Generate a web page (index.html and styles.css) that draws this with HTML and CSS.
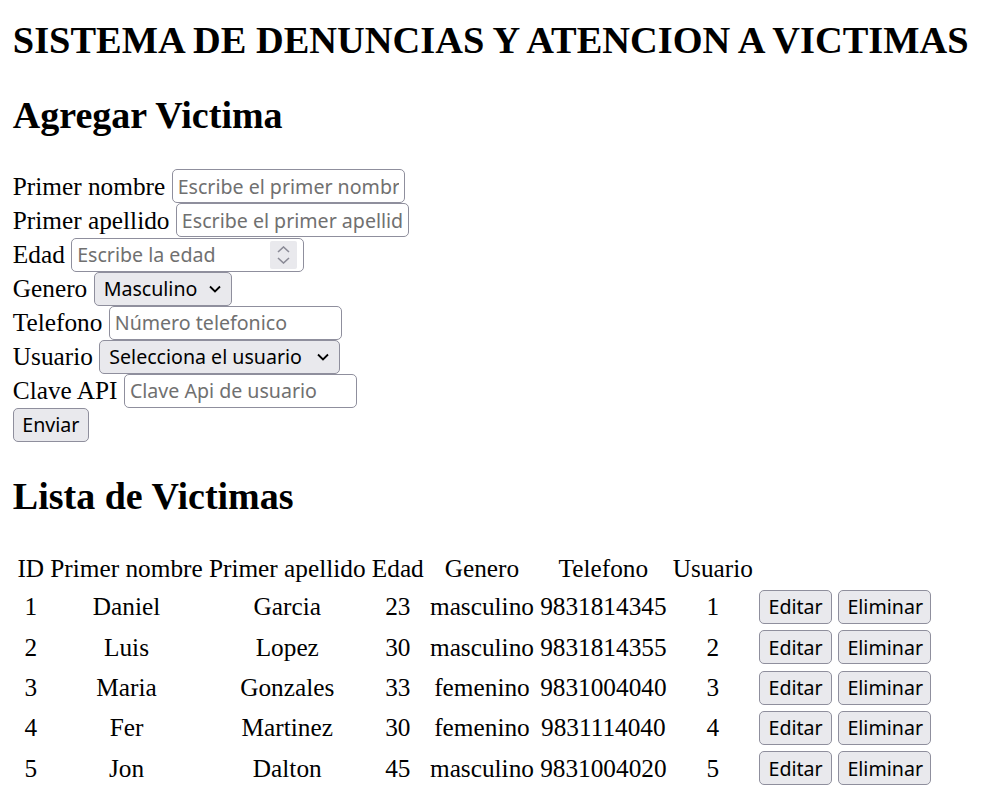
FILE: index.html
```html
<!DOCTYPE html>
<html lang="es">
<head>
<meta charset="utf-8">
<title>Sistema de denuncias</title>
<link rel="stylesheet" href="styles.css">
</head>
<body>
<div class="page">
  <h1 class="title">SISTEMA DE DENUNCIAS Y ATENCION A VICTIMAS</h1>
  <h2 class="section-title">Agregar Victima</h2>
  <form class="victim-form">
    <div class="field">
      <label class="field-label">Primer nombre</label>
      <input class="text-input" type="text" placeholder="Escribe el primer nombre">
    </div>
    <div class="field">
      <label class="field-label">Primer apellido</label>
      <input class="text-input" type="text" placeholder="Escribe el primer apellido">
    </div>
    <div class="field">
      <label class="field-label">Edad</label>
      <span class="num-box">
        <input class="num-input" type="text" placeholder="Escribe la edad">
        <span class="spin">
          <svg width="13" height="7" viewBox="0 0 13 7"><path d="M1 6 L6.5 1 L12 6" fill="none" stroke="#8a8a96" stroke-width="1.6"/></svg>
          <svg width="13" height="7" viewBox="0 0 13 7"><path d="M1 1 L6.5 6 L12 1" fill="none" stroke="#8a8a96" stroke-width="1.6"/></svg>
        </span>
      </span>
    </div>
    <div class="field">
      <label class="field-label">Genero</label>
      <span class="select-box select-genero">
        <select class="select">
          <option>Masculino</option>
          <option>Femenino</option>
        </select>
        <svg class="chevron" width="12" height="8" viewBox="0 0 12 8"><path d="M1 1.5 L6 6.5 L11 1.5" fill="none" stroke="#000" stroke-width="1.8"/></svg>
      </span>
    </div>
    <div class="field">
      <label class="field-label">Telefono</label>
      <input class="text-input" type="text" placeholder="Número telefonico">
    </div>
    <div class="field">
      <label class="field-label">Usuario</label>
      <span class="select-box select-usuario">
        <select class="select">
          <option>Selecciona el usuario</option>
        </select>
        <svg class="chevron" width="12" height="8" viewBox="0 0 12 8"><path d="M1 1.5 L6 6.5 L11 1.5" fill="none" stroke="#000" stroke-width="1.8"/></svg>
      </span>
    </div>
    <div class="field">
      <label class="field-label">Clave API</label>
      <input class="text-input" type="text" placeholder="Clave Api de usuario">
    </div>
    <div class="field">
      <button class="btn btn-submit" type="button">Enviar</button>
    </div>
  </form>
  <h2 class="section-title">Lista de Victimas</h2>
  <table class="victims">
    <thead>
      <tr>
        <th class="head">ID</th>
        <th class="head">Primer nombre</th>
        <th class="head">Primer apellido</th>
        <th class="head">Edad</th>
        <th class="head">Genero</th>
        <th class="head">Telefono</th>
        <th class="head">Usuario</th>
        <th class="head"></th>
      </tr>
    </thead>
    <tbody>
      <tr>
        <td class="cell">1</td><td class="cell">Daniel</td><td class="cell">Garcia</td><td class="cell">23</td><td class="cell">masculino</td><td class="cell">9831814345</td><td class="cell">1</td>
        <td class="cell"><button class="btn btn-edit" type="button">Editar</button> <button class="btn btn-del" type="button">Eliminar</button></td>
      </tr>
      <tr>
        <td class="cell">2</td><td class="cell">Luis</td><td class="cell">Lopez</td><td class="cell">30</td><td class="cell">masculino</td><td class="cell">9831814355</td><td class="cell">2</td>
        <td class="cell"><button class="btn btn-edit" type="button">Editar</button> <button class="btn btn-del" type="button">Eliminar</button></td>
      </tr>
      <tr>
        <td class="cell">3</td><td class="cell">Maria</td><td class="cell">Gonzales</td><td class="cell">33</td><td class="cell">femenino</td><td class="cell">9831004040</td><td class="cell">3</td>
        <td class="cell"><button class="btn btn-edit" type="button">Editar</button> <button class="btn btn-del" type="button">Eliminar</button></td>
      </tr>
      <tr>
        <td class="cell">4</td><td class="cell">Fer</td><td class="cell">Martinez</td><td class="cell">30</td><td class="cell">femenino</td><td class="cell">9831114040</td><td class="cell">4</td>
        <td class="cell"><button class="btn btn-edit" type="button">Editar</button> <button class="btn btn-del" type="button">Eliminar</button></td>
      </tr>
      <tr>
        <td class="cell">5</td><td class="cell">Jon</td><td class="cell">Dalton</td><td class="cell">45</td><td class="cell">masculino</td><td class="cell">9831004020</td><td class="cell">5</td>
        <td class="cell"><button class="btn btn-edit" type="button">Editar</button> <button class="btn btn-del" type="button">Eliminar</button></td>
      </tr>
    </tbody>
  </table>
</div>
</body>
</html>
```

FILE: styles.css
```css
html, body {
  margin: 0;
  padding: 0;
  background: #fff;
}

body {
  font-family: "Liberation Serif", "Times New Roman", serif;
  font-size: 25.3px;
  color: #000;
}

.page {
  padding: 17.5px 12.8px 12px;
}

.title {
  font-size: 38.4px;
  font-weight: bold;
  margin: 0 0 31.9px;
}

.section-title {
  font-size: 38px;
  font-weight: bold;
  margin: 31.9px 0;
}

.field {
  display: flex;
  align-items: center;
  gap: 6.4px;
  height: 34.1px;
}

.field-label {
  white-space: nowrap;
}

.text-input,
.num-box,
.select,
.btn {
  font-family: "Noto Sans", "Segoe UI", sans-serif;
  font-size: 19.6px;
  box-sizing: border-box;
  height: 34px;
  border: 1px solid #8f8f9d;
  border-radius: 5px;
  color: #000;
}

.text-input {
  width: 233px;
  padding: 0 5px;
  background: #fff;
  outline: none;
}

.text-input::placeholder,
.num-input::placeholder {
  color: #707070;
  opacity: 1;
}

.num-box {
  display: inline-flex;
  align-items: center;
  width: 233px;
  padding: 0 6px 0 5px;
  background: #fff;
}

.num-input {
  flex: 1;
  min-width: 0;
  border: none;
  outline: none;
  padding: 0;
  background: transparent;
  font: inherit;
}

.spin {
  display: flex;
  flex-direction: column;
  align-items: center;
  justify-content: center;
  gap: 4px;
  width: 27px;
  height: 28px;
  background: #e9e9ed;
  border-radius: 2px;
}

.spin svg {
  display: block;
}

.select-box {
  position: relative;
  display: inline-flex;
}

.select {
  appearance: none;
  -webkit-appearance: none;
  background: #e9e9ed;
  padding: 0 30px 0 9px;
  outline: none;
}

.select-genero .select {
  width: 138px;
}

.select-usuario .select {
  width: 241px;
}

.chevron {
  position: absolute;
  right: 11px;
  top: 13px;
  pointer-events: none;
}

.btn {
  background: #e9e9ed;
  padding: 0 8px;
  text-align: center;
  vertical-align: middle;
}

.btn-submit {
  width: 76px;
}

.btn-edit {
  width: 73px;
}

.btn-del {
  width: 93px;
}

.victims {
  border-spacing: 3.2px;
  font-size: 25.3px;
}

.head {
  font-weight: normal;
  text-align: center;
  padding: 1.6px;
}

.cell {
  text-align: center;
  padding: 1.6px;
  white-space: nowrap;
}
```
